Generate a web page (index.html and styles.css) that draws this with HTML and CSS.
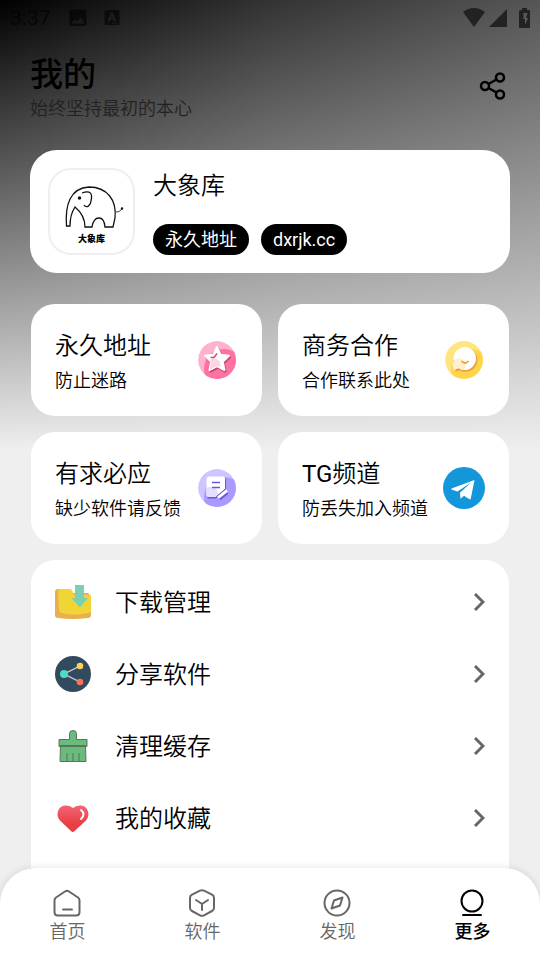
FILE: index.html
```html
<!DOCTYPE html>
<html lang="zh-CN">
<head>
<meta charset="utf-8">
<meta name="viewport" content="width=device-width, initial-scale=1">
<title>我的</title>
<link rel="stylesheet" href="styles.css">
</head>
<body>
<div class="app">
  <div class="status">
    <span class="clock">3:37</span>
    <svg class="status-image" width="18" height="18" viewBox="0 0 18 18"><path fill="currentColor" fill-rule="evenodd" d="M2 0.500h14q1.500 0 1.500 1.500v13.500q0 1.500-1.500 1.500h-14q-1.500 0-1.500-1.500v-13.500q0-1.500 1.500-1.500zM2.500 14.500h13l-4-6-3.500 4-2-2z"/></svg>
    <svg class="status-app" width="16" height="18" viewBox="0 0 16 18"><path fill="currentColor" fill-rule="evenodd" d="M2 1h12q1.500 0 1.500 1.500v12q0 1.500-1.500 1.500h-12q-1.500 0-1.500-1.500v-12q0-1.500 1.500-1.500zM3.500 12.500h2l.7-2h3.200l.7 2h2l-3.300-9h-2zM6.800 9l1-3 1 3zM8 14h1v1h-1zM10 14h1v1h-1zM12 14h1v1h-1z"/></svg>
    <span class="spacer"></span>
    <svg width="22" height="20" viewBox="0 0 22 20"><path fill="#222" d="M0 4q11-8 22 0L11 19z"/></svg>
    <svg class="signal" width="18" height="20" viewBox="0 0 18 20"><path fill="#222" d="M18 1v18H0z"/></svg>
    <svg width="11" height="20" viewBox="0 0 11 20"><path fill="#222" fill-rule="evenodd" d="M3 0h5v2h2q1 0 1 1v16q0 1-1 1H1q-1 0-1-1V3q0-1 1-1h2zM4.500 5v6h1.500v6l3-7H7l1.500-5z"/></svg>
  </div>

  <header class="header">
    <div>
      <h1>我的</h1>
      <p>始终坚持最初的本心</p>
    </div>
    <button class="share" aria-label="分享"><svg width="28" height="30" viewBox="0 0 28 30" fill="none" stroke="#000" stroke-width="2.500"><circle cx="6" cy="15" r="4"/><circle cx="21" cy="6.500" r="4"/><circle cx="21" cy="23.500" r="4"/><path d="M9.500 13l8-4.500M9.500 17l8 4.500"/></svg></button>
  </header>

  <main>
    <section class="profile">
      <div class="avatar">
        <svg viewBox="0 0 60 44" fill="none" stroke="#111" stroke-width="1.300"><path d="M2.500 41C1 20 6 3 25 2c18 0 28 13 26 31l-2 9h-8c-1-12-11-12-13 0h-7C21 33 17 27 11 22 7 28 6 33 6 41z"/><path stroke-width="0.800" d="M52 27c3 0 4-1 7-4"/><path d="M18 8c8-3 11 0 9 8-1 6-5 7-7 4"/><circle cx="15.500" cy="13" r="1.100" fill="#111"/><circle cx="58" cy="23.500" r=".6" fill="#111"/></svg>
        <span>大象库</span>
      </div>
      <div class="profile-info">
        <h2>大象库</h2>
        <div class="tags"><a href="#address">永久地址</a><a href="#site">dxrjk.cc</a></div>
      </div>
    </section>

    <section class="tiles">
      <a class="tile" href="#address"><span class="tile-text"><strong>永久地址</strong><small>防止迷路</small></span>
        <svg width="42" height="42" viewBox="0 0 42 42"><defs><clipPath id="disc"><circle cx="21" cy="21" r="19"/></clipPath><clipPath id="star"><path d="M21 8l3.600 7.800 8.400 1-6.200 5.900 1.700 8.300-7.500-4-7.500 4 1.700-8.300L9 16.800l8.400-1z"/></clipPath></defs><g clip-path="url(#disc)"><circle cx="21" cy="21" r="19" fill="#ffb2cf"/><circle cx="28" cy="30" r="20" fill="#ff71a0"/></g><path d="M22 9.500l3.600 7.800 8.400 1-6.200 5.900 1.700 8.300-7.500-4-7.500 4 1.700-8.300L10 18.300l8.400-1z" fill="#bb4773" stroke="#bb4773" stroke-width="2" stroke-linejoin="round"/><path d="M21 8l3.600 7.800 8.400 1-6.200 5.900 1.700 8.300-7.500-4-7.500 4 1.700-8.300L9 16.800l8.400-1z" fill="#fff" stroke="#fff" stroke-width="2" stroke-linejoin="round"/><circle cx="18" cy="26" r="6.500" fill="#ffd4e4" clip-path="url(#star)"/><path d="M14.500 18.500h3.500l3-4" fill="none" stroke="#d14a76" stroke-width="1.500"/></svg></a>
      <a class="tile" href="#business"><span class="tile-text"><strong>商务合作</strong><small>合作联系此处</small></span>
        <svg width="42" height="42" viewBox="0 0 42 42"><g clip-path="url(#disc)"><circle cx="21" cy="21" r="19" fill="#ffe580"/><circle cx="28" cy="30" r="20" fill="#ffd64b"/></g><path d="M23 9.500a11.500 11.500 0 1 1 0 23q-3 1-6-1l-5 1 2-6A11.500 11.500 0 0 1 23 9.500z" fill="#eda03b"/><path d="M21.500 8a11.500 11.500 0 1 1 0 23q-4 0-6-2l-5 2 1.500-6A11.500 11.500 0 0 1 21.500 8z" fill="#fff"/><path d="M9 25c3-7 11-7 13-1q1 4-1 7-3 0-5-2l-5 2z" fill="#fff0cf"/><path d="M18.500 22q3.500 4 7 0" fill="none" stroke="#eda03b" stroke-width="1.800"/></svg></a>
      <a class="tile" href="#request"><span class="tile-text"><strong>有求必应</strong><small>缺少软件请反馈</small></span>
        <svg width="42" height="42" viewBox="0 0 42 42"><g clip-path="url(#disc)"><circle cx="21" cy="21" r="19" fill="#cfc4ff"/><circle cx="28" cy="30" r="20" fill="#aa9aff"/></g><path d="M14 11h14q2 0 2 2v10l-10 8.500h-7q-2 0-2-3V14z" fill="#6d57dc"/><path d="M13 9.500h14q2 0 2 2V22l-9.500 8H13q-2.500 0-2.500-2.500V12q0-2.500 2.500-2.500z" fill="#fff"/><path d="M10.500 21q9-4 11.500 5v2l-2.500 2H13q-2.500 0-2.500-2.500z" fill="#e5dfff"/><path d="M16 15.500h8M16 20.500h8" stroke="#6d57dc" stroke-width="1.500"/><path d="M23.500 32l8-6.500" stroke="#6d57dc" stroke-width="3"/><path d="M22 30.500l9-7" stroke="#fff" stroke-width="3"/><path d="M20.500 29.500l8.500-7" stroke="#6d57dc" stroke-width="1"/></svg></a>
      <a class="tile" href="#channel"><span class="tile-text"><strong><span class="latin">TG</span>频道</strong><small>防丢失加入频道</small></span>
        <svg width="42" height="42" viewBox="0 0 42 42"><circle cx="21" cy="21" r="21" fill="#1496db"/><path d="M31.500 13L8.500 21.500q-.5.800.5 1.200l5.500 1.800L28 15.500 17 25.800l.5 6 3.500-3 5.500 3.500q1 .3 1.300-.8z" fill="#fff"/></svg></a>
    </section>

    <nav class="list" aria-label="功能">
      <a href="#downloads"><svg width="36" height="36" viewBox="0 0 36 36"><path d="M3 5h12l3 4h15l3 3v19q0 3-3 3-15 2-30 0-3 0-3-3V8q0-3 3-3z" fill="#e9ae4e"/><path d="M5 5h10q2 0 3 3.500l1 2.500 15 0q2 0 2 2v13q0 3-3 3c-9 2-19 2-26 0q-3 0-3-4L3 9q0-4 2-4z" fill="#f1d436"/><path d="M20 1h9v13h4L25 23.500 16.500 14H20z" fill="#7bcfb3"/></svg><span>下载管理</span><svg class="arrow" viewBox="0 0 12 20"><path d="M2 2l8 8-8 8"/></svg></a>
      <a href="#share"><svg width="36" height="36" viewBox="0 0 36 36"><circle cx="18" cy="18" r="18" fill="#324a5e"/><path d="M25 10L9 18l16 8" fill="none" stroke="#d5d7e5" stroke-width="1.300"/><circle cx="9" cy="18" r="4" fill="#4cdbc4"/><circle cx="25" cy="10" r="3.300" fill="#ffd05b"/><circle cx="25" cy="26" r="3.300" fill="#ff7058"/></svg><span>分享软件</span><svg class="arrow" viewBox="0 0 12 20"><path d="M2 2l8 8-8 8"/></svg></a>
      <a href="#clean"><svg width="36" height="36" viewBox="0 0 36 36" fill="#6abb7c" stroke="#58755e" stroke-width="1"><path d="M5.500 17.500h25l.5 16H5zM4 11.500h10.500V5.500q0-3 3.500-3t3.500 3v6H32v7H4zM12 33v-8M18 33v-8M24 33v-8"/></svg><span>清理缓存</span><svg class="arrow" viewBox="0 0 12 20"><path d="M2 2l8 8-8 8"/></svg></a>
      <a href="#favorites"><svg width="36" height="36" viewBox="0 0 36 36"><defs><linearGradient id="heart" x2="0" y2="1"><stop stop-color="#f36578"/><stop offset=".7" stop-color="#e83f43"/></linearGradient></defs><path d="M16 31Q17.800 32.800 19.600 31L31 20.500C36 15 33 6 26 5.500Q21 5 18 8 15 5 10 5.500C3 6 0 15 5 20.500z" fill="url(#heart)"/><path d="M26 10q5 4 0 9" fill="none" stroke="#fff" stroke-width="2" stroke-linecap="round"/></svg><span>我的收藏</span><svg class="arrow" viewBox="0 0 12 20"><path d="M2 2l8 8-8 8"/></svg></a>
    </nav>
  </main>

  <nav class="tabs" aria-label="主导航">
    <a href="#home"><svg viewBox="1 0 28 28"><path d="M12 2.500q2-1.500 4 0l9 6q1.500 1 1.500 3V23q0 3.500-3.500 3.500H5Q1.500 26.500 1.500 23V11.500q0-2 1.500-3zM10 20.500h9"/></svg><span>首页</span></a>
    <a href="#software"><svg viewBox="1 0 28 28"><path d="M12 1.700q2-1 4 0l8 4q2 1 2 3V19q0 2-2 3l-8 4.300q-2 1-4 0L4 22q-2-1-2-3V8.700q0-2 2-3zM8 11l6 4 6-4M14 15v6"/></svg><span>软件</span></a>
    <a href="#discover"><svg viewBox="1 0 28 28"><circle cx="14" cy="14" r="12.500"/><path d="M19.500 8.500l-2.500 8-8.500 3 2.500-8z"/></svg><span>发现</span></a>
    <a class="active" href="#more" aria-current="page"><svg viewBox="1 0 28 28"><circle cx="14" cy="12" r="10.500"/><path d="M5 26h18"/></svg><span>更多</span></a>
  </nav>
</div>
</body>
</html>
```
FILE: styles.css
```css
* { box-sizing: border-box; }

body {
  margin: 0;
  background: #efefef;
  color: #000;
  font-family: Roboto, "Noto Sans CJK SC", sans-serif;
}

a { color: inherit; text-decoration: none; }
h1, h2, p { margin: 0; font-weight: 400; }
svg { display: block; flex: none; }

.app {
  height: 100vh;
  display: flex;
  flex-direction: column;
  overflow: hidden;
  background:
    linear-gradient(rgba(239, 239, 239, 0), #efefef) 0 0 / 100% 450px no-repeat,
    linear-gradient(90deg, #000, #333 50%, #555) 0 0 / 100% 450px no-repeat,
    #efefef;
}

.status {
  display: flex;
  align-items: center;
  flex: none;
  height: 36px;
  padding: 0 10px;
  color: rgba(0, 0, 0, 0.6);
}
.clock { width: 59px; font-size: 21px; }
.status-app { margin-left: 17px; }
.spacer { flex: 1; }
.signal { margin: 0 12px 0 4px; }

.header {
  display: flex;
  align-items: center;
  justify-content: space-between;
  flex: none;
  height: 100px;
  padding: 2px 33px 0 30px;
}
.header h1 { font-size: 33px; line-height: 44px; font-weight: 500; }
.header p { font-size: 18px; line-height: 24px; font-weight: 350; color: #222; }
.share { padding: 0 0 2px; border: 0; background: none; }

main {
  flex: 1;
  min-height: 0;
  display: flex;
  flex-direction: column;
  padding: 14px 30px 0;
}

.profile {
  display: flex;
  flex: none;
  gap: 18px;
  padding: 18px;
  border-radius: 27px;
  background: #fff;
}
.avatar {
  display: flex;
  flex-direction: column;
  align-items: center;
  width: 87px;
  height: 87px;
  padding-top: 15px;
  border: 2px solid #efefef;
  border-radius: 23px;
}
.avatar svg { width: 60px; height: 44px; margin-left: 4px; }
.avatar span { font-size: 9px; line-height: 20px; font-weight: 900; }
.profile-info {
  display: flex;
  flex-direction: column;
  justify-content: space-between;
}
.profile-info h2 { font-size: 24px; line-height: 36px; font-weight: 350; }
.tags { display: flex; gap: 12px; }
.tags a {
  padding: 0 12px;
  border-radius: 16px;
  background: #000;
  color: #fff;
  font-size: 18px;
  line-height: 31px;
}

.tiles {
  display: grid;
  grid-template-columns: 1fr 1fr;
  flex: none;
  gap: 16px;
  margin: 31px 1px 16px;
}
.tile {
  display: flex;
  align-items: center;
  justify-content: space-between;
  height: 112px;
  padding: 0 24px;
  border-radius: 24px;
  background: #fff;
}
.tile-text {
  display: flex;
  flex-direction: column;
  padding-top: 6px;
  white-space: nowrap;
}
.tile strong { font-size: 24px; line-height: 36px; font-weight: 350; }
.tile .latin { font-weight: 400; }
.tile small { font-size: 18px; line-height: 34px; font-weight: 350; }

.list {
  flex: 1 0 auto;
  margin: 0 1px;
  padding: 6px 24px;
  border-radius: 24px 24px 0 0;
  background: #fff;
}
.list a {
  display: flex;
  align-items: center;
  height: 72px;
  font-size: 24px;
  font-weight: 350;
}
.list span { flex: 1; margin-left: 24px; padding-bottom: 4px; }
.arrow {
  width: 12px;
  height: 20px;
  fill: none;
  stroke: #666;
  stroke-width: 3;
}

.tabs {
  position: relative;
  display: grid;
  grid-template-columns: repeat(4, 1fr);
  flex: none;
  padding: 21px 0 13px;
  border-radius: 36px 36px 0 0;
  background: #fff;
  box-shadow: 0 0 8px rgba(0, 0, 0, 0.12);
  color: #666;
  font-size: 18px;
  line-height: 30px;
  font-weight: 350;
}
.tabs a { display: flex; flex-direction: column; align-items: center; }
.tabs svg {
  width: 28px;
  height: 28px;
  overflow: visible;
  fill: none;
  stroke: currentColor;
  stroke-width: 2;
  stroke-linecap: round;
  stroke-linejoin: round;
}
.tabs .active { color: #000; font-weight: 500; }
```
